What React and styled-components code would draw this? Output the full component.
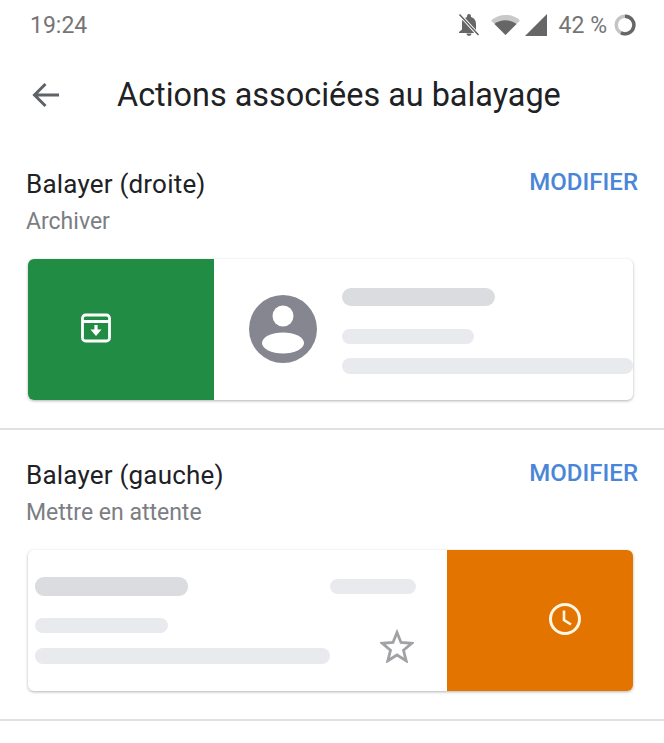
import React from 'react';
import styled, { createGlobalStyle } from 'styled-components';

const GlobalStyle = createGlobalStyle`
  html, body {
    margin: 0;
    padding: 0;
    background: #fff;
    font-family: Roboto, "Liberation Sans", sans-serif;
  }
`;

const Page = styled.div`
  width: 664px;
  height: 743px;
  overflow: hidden;
  background: #fff;
`;

const StatusBar = styled.div`
  height: 50px;
  display: flex;
  align-items: center;
  justify-content: space-between;
  padding: 0 28px 0 30px;
  box-sizing: border-box;
  color: #757575;
  font-size: 23px;
`;

const StatusRight = styled.div`
  display: flex;
  align-items: center;
`;

const StatusItem = styled.span`
  display: flex;
  margin-left: ${(p) => p.$gap || 0}px;
`;

const Header = styled.div`
  height: 89px;
  display: flex;
  align-items: center;
  padding: 0 0 0 32px;
  box-sizing: border-box;
  gap: 57px;
`;

const Title = styled.h1`
  margin: 0;
  font-size: 32.4px;
  font-weight: 400;
  color: #202124;
`;

const Section = styled.section`
  padding: 29px 31px 0 28px;
  border-bottom: 2px solid #dfe0e2;
  height: 291px;
  box-sizing: border-box;
`;

const SectionHead = styled.div`
  display: flex;
  justify-content: space-between;
  align-items: flex-start;
`;

const SectionName = styled.div`
  font-size: 26px;
  line-height: 32px;
  letter-spacing: 0.2px;
  color: #202124;
  margin-left: -2px;
`;

const SectionSub = styled.div`
  font-size: 23px;
  line-height: 28px;
  margin: 8px 0 0 -2px;
  color: #7b7e82;
`;

const Modify = styled.button`
  border: 0;
  padding: 0;
  background: none;
  font: 500 24px/28px Roboto, sans-serif;
  color: #4a86d8;
  margin-right: -5px;
`;

const Card = styled.div`
  margin-top: 23px;
  height: 141px;
  width: 605px;
  border-radius: 6px;
  overflow: hidden;
  display: flex;
  background: #fff;
  box-shadow: 0 1px 3px rgba(60, 64, 67, 0.4);
`;

const Swipe = styled.div`
  flex: 0 0 186px;
  display: flex;
  align-items: center;
  justify-content: center;
  background: ${(p) => p.$color};
  padding: 0 ${(p) => p.$shiftLeft || 0}px 3px ${(p) => p.$shiftRight || 0}px;
  box-sizing: border-box;
`;

const Bar = styled.div`
  height: ${(p) => p.$h}px;
  width: ${(p) => p.$w}px;
  margin-bottom: ${(p) => p.$after || 0}px;
  border-radius: 9px;
  background: ${(p) => (p.$dark ? '#dadce0' : '#e8eaed')};
`;

const ThreadRow = styled.div`
  flex: 1;
  display: flex;
  align-items: flex-start;
  padding: 36px 0 0 35px;
  gap: 25px;
`;

const Lines = styled.div`
  display: flex;
  flex-direction: column;
  align-items: flex-start;
  margin-top: ${(p) => p.$top || 0}px;
`;

const LeftThread = styled.div`
  flex: 1;
  padding: 27px 31px 0 7px;
  display: flex;
  justify-content: space-between;
  align-items: flex-start;
`;

const SideColumn = styled.div`
  display: flex;
  flex-direction: column;
  align-items: flex-end;
  padding-top: 2px;
`;

const StarSlot = styled.div`
  display: flex;
  margin: 35px 2px 0 0;
`;

const ArchiveIcon = () => (
  <svg width="32" height="32" viewBox="0 0 32 32" fill="none" stroke="#fff" strokeWidth="2.8">
    <rect x="2.500" y="3" width="27" height="26" rx="3" />
    <path d="M3 9.500h26" />
    <path d="M16 13v8" strokeWidth="3.200" />
    <path d="M10.500 17.500h11L16 24z" fill="#fff" stroke="none" />
  </svg>
);

const ClockIcon = () => (
  <svg width="34" height="34" viewBox="0 0 34 34" fill="none" stroke="#fff6e4" strokeWidth="3">
    <circle cx="17" cy="17" r="14.500" />
    <path d="M16 8.500V18l7 4.500" strokeWidth="2.600" />
  </svg>
);

const Avatar = () => (
  <svg width="68" height="68" viewBox="0 0 68 68">
    <circle cx="34" cy="34" r="34" fill="#85868f" />
    <circle cx="34" cy="21" r="10.500" fill="#fff" />
    <ellipse cx="34" cy="48" rx="21" ry="10.500" fill="#fff" />
  </svg>
);

const Star = () => (
  <svg width="34" height="34" viewBox="0 0 34 34" fill="none" stroke="#a0a2a5" strokeWidth="2.800">
    <path d="M17 3.500l4 10 10.800.8-8.300 7 2.700 10.500L17 26l-9.200 5.800 2.700-10.500-8.300-7 10.800-.8z" />
  </svg>
);

const BackArrow = () => (
  <svg width="28" height="26" viewBox="0 0 28 26" fill="none" stroke="#5f6368" strokeWidth="3">
    <path d="M27 13H3M13.500 2L2.500 13l11 11" />
  </svg>
);

const BellOff = () => (
  <svg width="24" height="24" viewBox="0 0 24 24" fill="#666">
    <path d="M12 23a2.600 2.600 0 0 0 2.600-2.400H9.400A2.600 2.600 0 0 0 12 23zM19 16.500V11c0-3.400-1.800-6.100-5-6.900V3a2 2 0 0 0-4 0v1.100c-.7.2-1.400.5-2 .9l11 12zM5.500 6.500C5.200 7.600 5 9.200 5 11v5.500l-3 2.500v1h16z" />
    <path d="M3 2l18 20" stroke="#fff" strokeWidth="3" />
    <path d="M2.500 1.500l19 20.500" stroke="#666" strokeWidth="1.600" />
  </svg>
);

const Wifi = () => (
  <svg width="29" height="22" viewBox="0 0 29 22">
    <path d="M0 6.500C8-1 21-1 29 6.500L14.500 21z" fill="#c9c9c9" />
    <path d="M3.500 10c6-5 16-5 22 0L14.500 21z" fill="#666" />
  </svg>
);

const Signal = () => (
  <svg width="22" height="22" viewBox="0 0 22 22">
    <path d="M0 22L22 0v22z" fill="#666" />
  </svg>
);

const Battery = () => (
  <svg width="22" height="22" viewBox="0 0 22 22" fill="none" strokeWidth="3.400">
    <circle cx="11" cy="11" r="8.800" stroke="#c4c4c4" />
    <path d="M11 2.200A8.800 8.800 0 1 1 7 18.800" stroke="#666" />
  </svg>
);

const App = () => (
  <Page>
    <GlobalStyle />
    <StatusBar>
      <span>19:24</span>
      <StatusRight>
        <StatusItem><BellOff /></StatusItem>
        <StatusItem $gap={10}><Wifi /></StatusItem>
        <StatusItem $gap={5}><Signal /></StatusItem>
        <StatusItem $gap={12}>42 %</StatusItem>
        <StatusItem $gap={7}><Battery /></StatusItem>
      </StatusRight>
    </StatusBar>
    <Header>
      <BackArrow />
      <Title>Actions associées au balayage</Title>
    </Header>
    <Section>
      <SectionHead>
        <div>
          <SectionName>Balayer (droite)</SectionName>
          <SectionSub>Archiver</SectionSub>
        </div>
        <Modify>MODIFIER</Modify>
      </SectionHead>
      <Card>
        <Swipe $color="#218c44" $shiftLeft={50}>
          <ArchiveIcon />
        </Swipe>
        <ThreadRow>
          <Avatar />
          <Lines $top={-7}>
            <Bar $dark $w={153} $h={18} $after={23} />
            <Bar $w={132} $h={15} $after={14} />
            <Bar $w={291} $h={16} />
          </Lines>
        </ThreadRow>
      </Card>
    </Section>
    <Section>
      <SectionHead>
        <div>
          <SectionName>Balayer (gauche)</SectionName>
          <SectionSub>Mettre en attente</SectionSub>
        </div>
        <Modify>MODIFIER</Modify>
      </SectionHead>
      <Card>
        <LeftThread>
          <Lines>
            <Bar $dark $w={153} $h={19} $after={22} />
            <Bar $w={133} $h={15} $after={15} />
            <Bar $w={295} $h={16} />
          </Lines>
          <SideColumn>
            <Bar $w={86} $h={15} />
            <StarSlot><Star /></StarSlot>
          </SideColumn>
        </LeftThread>
        <Swipe $color="#e37400" $shiftRight={50}>
          <ClockIcon />
        </Swipe>
      </Card>
    </Section>
  </Page>
);

export default App;
